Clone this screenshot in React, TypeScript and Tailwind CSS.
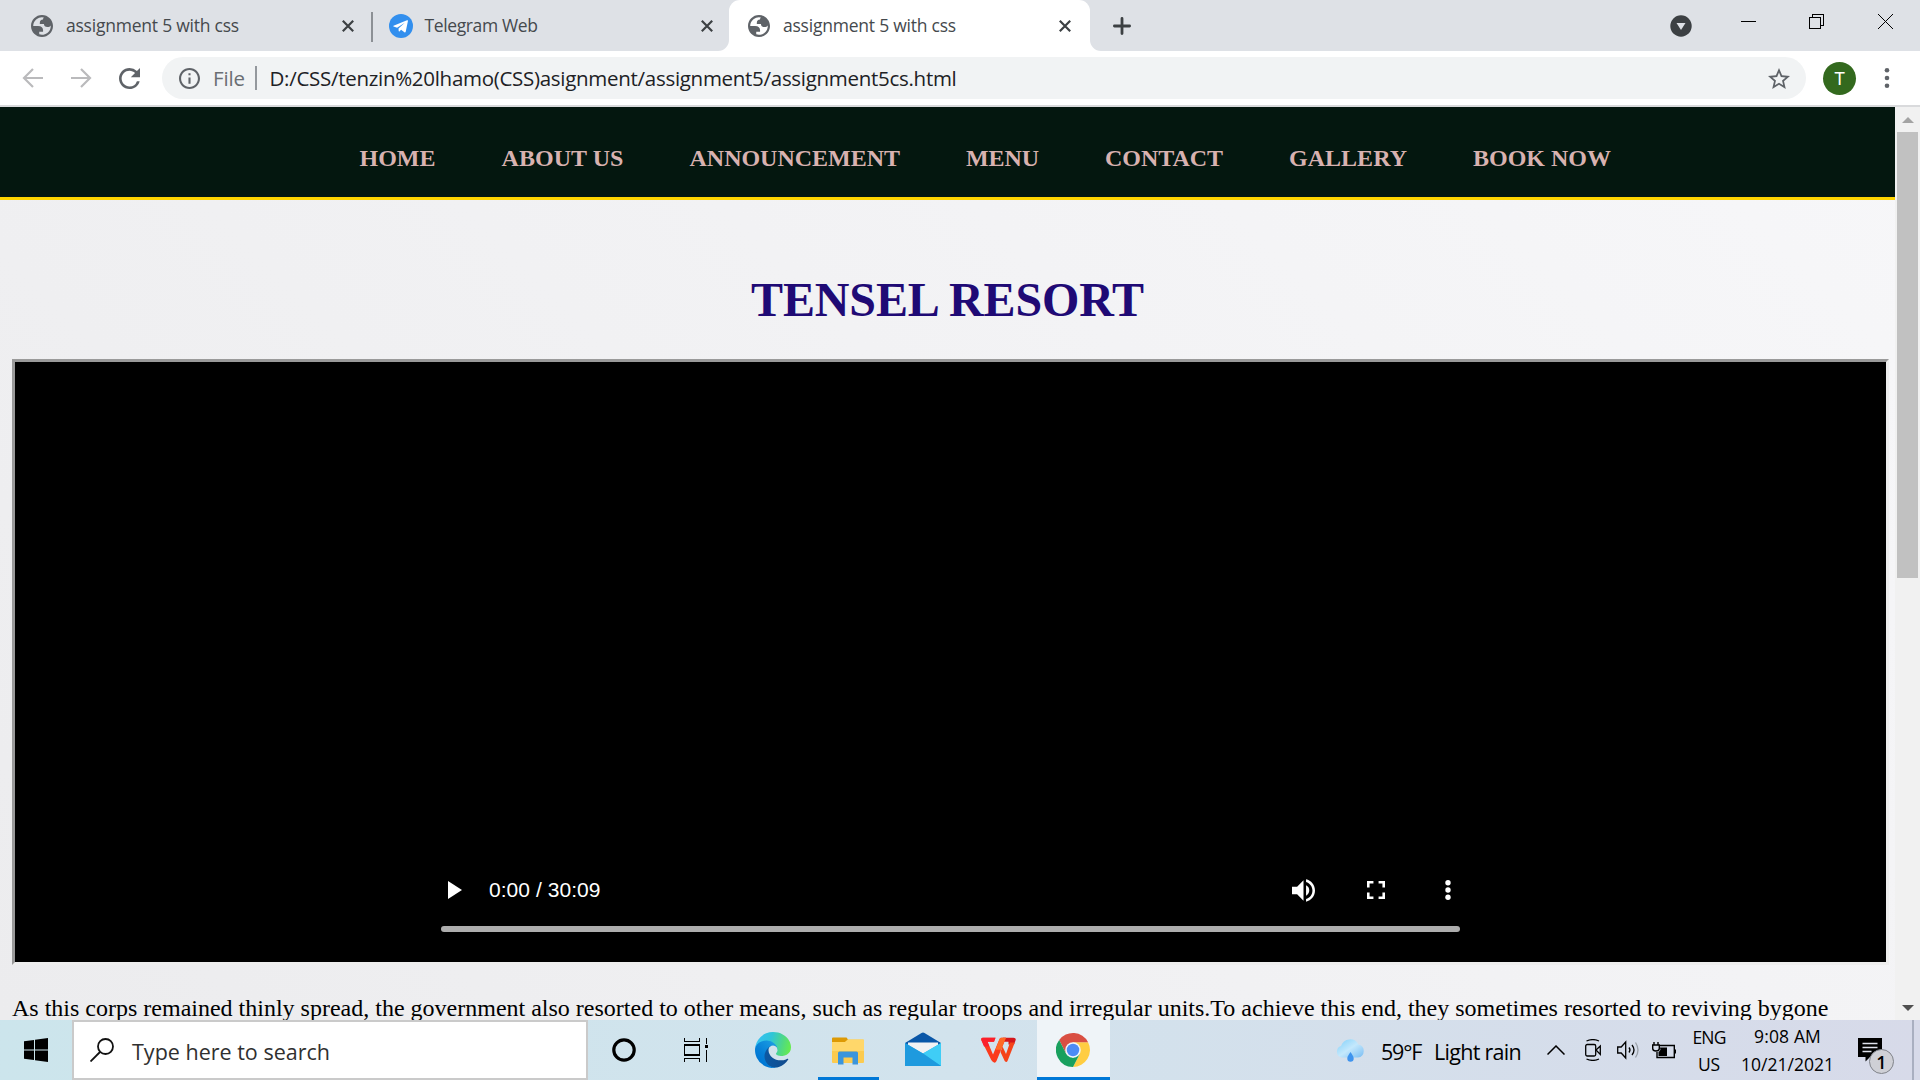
import { useLayoutEffect, useRef, type ReactNode } from "react";

/** Text run that spreads its letters so the run fills exactly `w` pixels. */
function Label({ w, className = "", children }: { w: number; className?: string; children: string }) {
  const ref = useRef<HTMLSpanElement>(null);
  useLayoutEffect(() => {
    const el = ref.current;
    if (!el) return;
    el.style.letterSpacing = "0px";
    const natural = el.getBoundingClientRect().width;
    el.style.letterSpacing = `${(w - natural) / children.length}px`;
  }, [w, children]);
  return (
    <span className={`block shrink-0 ${className}`} style={{ width: w }}>
      <span ref={ref} className="inline-block whitespace-pre">
        {children}
      </span>
    </span>
  );
}

const UI = "font-['Open_Sans','Noto_Sans',sans-serif]";
const SERIF = "font-['Liberation_Serif','Times_New_Roman',serif]";

function Globe() {
  return (
    <svg viewBox="2 2 20 20" className="size-[22px] shrink-0" fill="#5f6368" fillRule="evenodd">
      <path d="M12 2C6.480 2 2 6.480 2 12s4.480 10 10 10 10-4.480 10-10S17.520 2 12 2zM4 12h4.400c3.407.022 4.922 1.730 4.543 5.127H9.488v2.470a8.004 8.004 0 0 0 10.498-8.080C19.327 12.506 18.332 13 17 13c-2.137 0-3.206-.916-3.206-2.750h-3.748c-.274-2.728.683-4.092 2.870-4.092 0-.975.327-1.597.811-1.970A8.004 8.004 0 0 0 4 12z" />
    </svg>
  );
}

function TabClose() {
  return (
    <svg viewBox="0 0 12 12" className="size-3 shrink-0" stroke="#3c4043" strokeWidth="2.2">
      <path d="M.8.8l10.400 10.400M11.200.8L.8 11.200" />
    </svg>
  );
}

function TabStrip() {
  return (
    <div className="flex h-[51px] shrink-0 bg-[#dee1e6] text-[#45494d]">
      <div className="flex w-[371px] items-center pl-[31px]">
        <Globe />
        <Label w={173} className={`ml-[13px] text-[17.500px] ${UI}`}>assignment 5 with css</Label>
        <div className="ml-[103px]"><TabClose /></div>
      </div>
      <div className="mt-3 h-[30px] w-[1.500px] shrink-0 bg-[#8c9095]" />
      <div className="flex w-[356.500px] shrink-0 items-center pl-[16px]">
        <svg viewBox="0 0 24 24" className="size-6 shrink-0">
          <circle cx="12" cy="12" r="12" fill="#328fee" />
          <path d="M4.500 11.800L18 6.300c.7-.2 1.100.2.900.9l-2.200 10.500c-.2.800-.7 1-1.300.6l-3.300-2.500-1.700 1.600c-.4.300-.6.200-.7-.3l-.2-2.600 6.300-5.700-7.700 4.900-3.500-1.100c-.7-.2-.6-.6-.1-.8z" fill="#fff" />
        </svg>
        <Label w={113} className={`ml-[12px] text-[17.500px] ${UI}`}>Telegram Web</Label>
        <div className="ml-[163px]"><TabClose /></div>
      </div>
      <div className="relative flex w-[361px] shrink-0 items-center rounded-t-[11px] bg-white pl-[19px]">
        <svg className="absolute -left-[11px] bottom-0 size-[11px]" viewBox="0 0 11 11">
          <path d="M11 0v11H0A11 11 0 0 0 11 0z" fill="#fff" />
        </svg>
        <svg className="absolute -right-[11px] bottom-0 size-[11px]" viewBox="0 0 11 11">
          <path d="M0 0v11h11A11 11 0 0 1 0 0z" fill="#fff" />
        </svg>
        <Globe />
        <Label w={173} className={`ml-[13px] text-[17.500px] ${UI}`}>assignment 5 with css</Label>
        <div className="ml-[103px]"><TabClose /></div>
      </div>
      <div className="ml-[23px] flex items-center">
        <svg viewBox="0 0 18 18" className="size-[18px]" stroke="#3c4043" strokeWidth="2.800" strokeLinecap="round">
          <path d="M9 1.400v15.200M1.400 9h15.200" />
        </svg>
      </div>
      <div className="ml-auto flex items-start pr-[27px]">
        <svg viewBox="0 0 22 22" className="mt-[14.500px] size-[22px]">
          <circle cx="11" cy="11" r="10.700" fill="#3c4043" />
          <path d="M6.500 8h9L11 15z" fill="#dee1e6" />
        </svg>
        <div className="mt-[21px] ml-[49px] h-px w-[15px] bg-black" />
        <svg viewBox="0 0 15 15" className="mt-[14px] ml-[53px] size-[15px]" fill="none" stroke="#000" shapeRendering="crispEdges">
          <path d="M.5 3.500h11v11H.5zM3.500 3.500v-3h11v11h-3" />
        </svg>
        <svg viewBox="0 0 15 15" className="mt-[14px] ml-[54px] size-[15px]" stroke="#000">
          <path d="M0 0l15 15M15 0L0 15" />
        </svg>
      </div>
    </div>
  );
}

function Toolbar() {
  return (
    <div className="flex h-[56px] shrink-0 items-center border-b-2 border-[#d9dadc] bg-white pl-[22px]">
      <svg viewBox="0 0 22 20" className="h-5 w-[22px] shrink-0" fill="none" stroke="#bababc" strokeWidth="2.200">
        <path d="M21 10H2.500M11 1L2 10l9 9" />
      </svg>
      <svg viewBox="0 0 22 20" className="ml-[26px] h-5 w-[22px] shrink-0" fill="none" stroke="#bababc" strokeWidth="2.200">
        <path d="M1 10h18.500M11 1l9 9-9 9" />
      </svg>
      <svg viewBox="4 4 16 16" className="ml-[27px] size-[21px] shrink-0" fill="#5f6368">
        <path d="M17.650 6.350A7.958 7.958 0 0 0 12 4c-4.420 0-7.990 3.580-7.990 8s3.570 8 7.990 8c3.730 0 6.840-2.550 7.730-6h-2.080A5.990 5.990 0 0 1 12 18c-3.310 0-6-2.690-6-6s2.690-6 6-6c1.660 0 3.140.690 4.220 1.780L13 11h7V4l-2.350 2.350z" />
      </svg>
      <div className="ml-[22px] flex h-[42px] w-[1644px] shrink-0 items-center rounded-full bg-[#f1f3f4] pl-[17px]">
        <svg viewBox="2 2 20 20" className="size-[21px] shrink-0" fill="#5f6368">
          <path d="M11 7h2v2h-2zm0 4h2v6h-2zm1-9C6.480 2 2 6.480 2 12s4.480 10 10 10 10-4.480 10-10S17.520 2 12 2zm0 18c-4.410 0-8-3.590-8-8s3.590-8 8-8 8 3.590 8 8-3.590 8-8 8z" />
        </svg>
        <Label w={32} className={`mt-px ml-[13px] text-[20.500px] text-[#6a6e73] ${UI}`}>File</Label>
        <div className="ml-[10px] h-6 w-[1.500px] shrink-0 bg-[#94989d]" />
        <Label w={687} className={`mt-px ml-[13px] text-[20.500px] text-[#202124] ${UI}`}>
          D:/CSS/tenzin%20lhamo(CSS)asignment/assignment5/assignment5cs.html
        </Label>
        <svg viewBox="2 2 20 19" className="mr-4 ml-auto h-[21px] w-[22px] shrink-0" fill="#5f6368">
          <path d="M22 9.240l-7.190-.620L12 2 9.190 8.630 2 9.240l5.460 4.730L5.820 21 12 17.270 18.180 21l-1.630-7.030L22 9.240zM12 15.400l-3.760 2.270 1-4.280-3.320-2.880 4.380-.380L12 6.100l1.710 4.040 4.380.380-3.320 2.880 1 4.280L12 15.400z" />
        </svg>
      </div>
      <div className="ml-[17px] flex size-[33px] shrink-0 items-center justify-center rounded-full bg-[#33691e] pt-px font-['Roboto',sans-serif] text-[18px] text-white">
        T
      </div>
      <svg viewBox="0 0 6 22" className="ml-[28px] h-[22px] w-1.5 shrink-0" fill="#5f6368">
        <circle cx="3" cy="3.200" r="2.300" />
        <circle cx="3" cy="11" r="2.300" />
        <circle cx="3" cy="18.800" r="2.300" />
      </svg>
    </div>
  );
}

const NAV: [string, number][] = [
  ["HOME", 76],
  ["ABOUT US", 122],
  ["ANNOUNCEMENT", 210.5],
  ["MENU", 73],
  ["CONTACT", 118],
  ["GALLERY", 118],
  ["BOOK NOW", 138],
];

function Video() {
  return (
    <div className="mx-3 flex h-[606px] w-[1877px] shrink-0 flex-col border-[3px] border-t-[#9a9a9a] border-r-[#eeeeee] border-b-[#eeeeee] border-l-[#9a9a9a] bg-black">
      <div className="mt-auto mr-[426px] mb-[30px] ml-[426px]">
        <div className="flex h-6 items-center pl-[7px]">
          <svg viewBox="0 0 14 18" className="h-[18px] w-[14px]" fill="#fff"><path d="M0 0l14 9-14 9z" /></svg>
          <Label w={111.5} className="ml-[27px] font-['Liberation_Sans',Arial,sans-serif] text-[21px] leading-6 text-white">0:00 / 30:09</Label>
          <svg viewBox="3 3.200 18 17.600" className="ml-auto size-[23px]" fill="#fff">
            <path d="M3 9v6h4l5 5V4L7 9H3zm13.500 3A4.500 4.500 0 0 0 14 7.970v8.050c1.480-.730 2.500-2.250 2.500-4.020zM14 3.230v2.060c2.890.860 5 3.540 5 6.710s-2.110 5.850-5 6.710v2.060c4.010-.910 7-4.490 7-8.770s-2.990-7.860-7-8.770z" />
          </svg>
          <svg viewBox="5 5 14 14" className="ml-[52px] size-[18px]" fill="#fff">
            <path d="M7 14H5v5h5v-2H7v-3zm-2-4h2V7h3V5H5v5zm12 7h-3v2h5v-5h-2v3zM14 5v2h3v3h2V5h-5z" />
          </svg>
          <svg viewBox="0 0 6 20" className="mr-[9px] ml-[60px] h-5 w-1.5" fill="#fff">
            <circle cx="3" cy="2.700" r="2.700" />
            <circle cx="3" cy="10" r="2.700" />
            <circle cx="3" cy="17.300" r="2.700" />
          </svg>
        </div>
        <div className="mt-6 h-1.5 rounded-full bg-[#adadad]" />
      </div>
    </div>
  );
}

function Page() {
  return (
    <div className={`flex w-[1895px] shrink-0 flex-col overflow-hidden bg-linear-45 from-[#ececee] to-[#f7f7f9] ${SERIF}`}>
      <nav className="flex h-[93px] shrink-0 items-center gap-[66px] border-b-[3px] border-[#ffd500] bg-[#04170f] pt-[12px] pl-[359.500px] text-[24px] leading-7 font-bold text-[#d8b2b0]">
        {NAV.map(([t, w]) => (
          <Label key={t} w={w}>{t}</Label>
        ))}
      </nav>
      <h1 className="mt-[72px] flex h-[56px] shrink-0 justify-center text-[48px] leading-[56px] font-bold text-[#1f0a75]">
        <Label w={393}>TENSEL RESORT</Label>
      </h1>
      <div className="h-[31px] shrink-0" />
      <Video />
      <p className="mt-[29px] ml-3 flex shrink-0 text-[24px] leading-7 text-black">
        <Label w={1816.5}>
          As this corps remained thinly spread, the government also resorted to other means, such as regular troops and irregular units.To achieve this end, they sometimes resorted to reviving bygone
        </Label>
      </p>
    </div>
  );
}

function Scrollbar() {
  return (
    <div className="flex grow flex-col items-center bg-[#f1f1f1]">
      <svg viewBox="0 0 12 6" className="mt-[10px] h-1.5 w-3" fill="#a3a3a3"><path d="M6 0l6 6H0z" /></svg>
      <div className="mt-[9px] h-[446px] w-[21px] bg-[#c1c1c1]" />
      <svg viewBox="0 0 12 6" className="mt-auto mb-[9px] h-1.5 w-3" fill="#505050"><path d="M0 0h12L6 6z" /></svg>
    </div>
  );
}

function EdgeIcon() {
  return (
    <svg viewBox="0 0 256 256" className="size-9">
      <defs>
        <linearGradient id="e1" x1="63" y1="177" x2="241" y2="177" gradientUnits="userSpaceOnUse">
          <stop offset="0" stopColor="#0c59a4" />
          <stop offset="1" stopColor="#114a8b" />
        </linearGradient>
        <linearGradient id="e2" x1="157" y1="92" x2="46" y2="213" gradientUnits="userSpaceOnUse">
          <stop offset="0" stopColor="#1b9de2" />
          <stop offset=".16" stopColor="#1595df" />
          <stop offset=".67" stopColor="#0680d7" />
          <stop offset="1" stopColor="#0078d4" />
        </linearGradient>
        <linearGradient id="e3" x1="10" y1="60" x2="250" y2="120" gradientUnits="userSpaceOnUse">
          <stop offset="0" stopColor="#35c1f1" />
          <stop offset=".4" stopColor="#2fc5d8" />
          <stop offset=".75" stopColor="#4fd983" />
          <stop offset="1" stopColor="#66eb4f" />
        </linearGradient>
      </defs>
      <path fill="url(#e1)" d="M231 190.500c-3.400 1.800-6.900 3.400-10.500 4.700a101.700 101.700 0 0 1-35.900 6.500c-47.300 0-88.500-32.500-88.500-74.300.1-11.400 6.400-21.900 16.400-27.300-42.800 1.800-53.800 46.400-53.800 72.500 0 73.900 68.100 81.400 82.800 81.400 7.900 0 19.800-2.300 27-4.600l1.300-.4a128.300 128.300 0 0 0 66.600-52.800 4 4 0 0 0-5.400-5.700z" />
      <path fill="url(#e2)" d="M105.700 241.400a79.200 79.200 0 0 1-22.700-21.300 80.700 80.700 0 0 1 29.500-120c3.200-1.500 8.500-4.100 15.600-4a32.400 32.400 0 0 1 25.700 13 31.900 31.900 0 0 1 6.300 18.700c0-.2 24.500-79.600-80-79.600C36.200 48.200.1 89.900.1 126.400c-.2 19.300 4 38.500 12.100 56a128 128 0 0 0 156.400 67 75.500 75.500 0 0 1-62.800-8z" />
      <path fill="url(#e3)" d="M152.300 148.900c-.9 1-3.400 2.500-3.400 5.600 0 2.600 1.700 5.200 4.800 7.300 14.300 10 41.400 8.600 41.500 8.600 10.700 0 21.100-2.900 30.300-8.300A61.400 61.400 0 0 0 256 109.100c.3-22.400-8-37.300-11.300-43.900C223.500 23.900 177.700 0 128 0A128 128 0 0 0 0 126.200C.5 89.700 36.800 60.200 80 60.200c3.500 0 23.500.3 42 10.100 16.300 8.600 24.900 18.900 30.800 29.200 6.200 10.700 7.300 24.100 7.300 29.500 0 5.300-2.700 13.300-7.800 19.900z" />
    </svg>
  );
}

function ExplorerIcon() {
  return (
    <svg viewBox="0 0 34 28" className="h-7 w-[34px]">
      <path d="M1 1.500Q1 .5 2 .5h13.500L17 2.500 15 5H1z" fill="#dd9a05" />
      <path d="M1 5h13l3-2.500h15q1 0 1 1V25q0 1-1 1H2q-1 0-1-1z" fill="#fccb4f" />
      <path d="M1 5h13l3-2.500h15q1 0 1 1V14H1z" fill="#ffd76a" />
      <path d="M7 27.500V16q0-1.500 1.500-1.500h17q1.500 0 1.500 1.500v11.500h-5.500v-7h-9v7z" fill="#3b95dc" />
    </svg>
  );
}

function MailIcon() {
  return (
    <svg viewBox="0 0 36 34" className="h-[34px] w-9">
      <path d="M0 11L16.500 1q1.500-.9 3 0L36 11V20H0z" fill="#0a57a8" />
      <path d="M3 10.500h30v12H3z" fill="#f2f2f4" />
      <path d="M0 11l18 10.500L36 11V34H0z" fill="#2bb4ea" />
      <path d="M36 11V34L18 21.500z" fill="#3fcdf6" />
      <path d="M0 11l18 10.500L36 34H0z" fill="#1e9ade" />
    </svg>
  );
}

function WpsIcon() {
  return (
    <svg viewBox="0 0 35 26" className="h-[26px] w-[35px]">
      <path d="M22 .8h10.500Q35.500.8 34.500 3.500L33 7.500h-5.500V4.800H21z" fill="#d4161b" />
      <path d="M29 5.500h4.800L26.500 24q-1 2-2.800 0L19.500 15l2-5.500 3.500 7.500z" fill="#f5431a" />
      <path d="M.5 3.500Q-.5.8 2 .8h12.500L13 4.800H6.500L12 17.500 18.500 2Q19 .8 20.500.8H25L15.500 24q-1.500 3-4 .5Q10 23 9.500 21.500z" fill="#fb3a1c" />
      <path d="M.5 3.500Q-.5.8 2 .8h12.500L13 4.800H6.500l2 4.700H3z" fill="#fb1f2b" />
      <path d="M18.500 2Q19 .8 20.500.8H25l-5 12h-5.500z" fill="#ff6a26" />
    </svg>
  );
}

function ChromeIcon() {
  return (
    <svg viewBox="0 0 48 48" className="size-[34px]">
      <path d="M24 13h21.300A24 24 0 0 1 24 48l9.500-18.500z" fill="#ffcd42" />
      <path d="M4.500 10A24 24 0 0 1 45.300 13H24l-9.500 16.500z" fill="#d94f43" />
      <path d="M4.500 10l10 19.500L24 35l9.500-5.500L24 48A24 24 0 0 1 4.500 10z" fill="#19a05e" />
      <circle cx="24" cy="24" r="11" fill="#f1f5f9" />
      <circle cx="24" cy="24" r="8.800" fill="#4c8bf5" />
    </svg>
  );
}

function Cell({ w, active = false, line = 0, children }: { w: number; active?: boolean; line?: number; children: ReactNode }) {
  return (
    <div className={`flex h-full shrink-0 flex-col items-center ${active ? "bg-[#eff4f8]" : ""}`} style={{ width: w }}>
      <div className="flex h-[57px] items-center pt-[3px]">{children}</div>
      {line > 0 && <div className="h-[3px] bg-[#0078d7]" style={{ width: line }} />}
    </div>
  );
}

function Taskbar() {
  return (
    <div className={`flex h-[60px] shrink-0 items-stretch bg-linear-to-r from-[#cce5ec] via-[#d2e3ed] via-50% to-[#d7dae9] text-black ${UI}`}>
      <div className="flex w-[72px] items-center justify-center">
        <svg viewBox="0 0 24 24" className="size-6" fill="#000">
          <path d="M0 3.300L10 2v9.500H0zM11 1.800L24 0v11.500H11zM0 12.500h10V22L0 20.700zM11 12.500h13V24l-13-1.800z" />
        </svg>
      </div>
      <div className="flex w-[516px] shrink-0 items-center border-2 border-[#cacaca] bg-white pl-4">
        <svg viewBox="0 0 24 24" className="size-6 shrink-0" fill="none" stroke="#111" strokeWidth="1.800">
          <circle cx="15.500" cy="8.500" r="7.500" />
          <path d="M10 14L.5 23.500" />
        </svg>
        <Label w={198} className="mt-[4px] ml-[18px] text-[21.500px] text-[#303030]">Type here to search</Label>
      </div>
      <Cell w={72}>
        <svg viewBox="0 0 24 24" className="size-6" fill="none" stroke="#000" strokeWidth="3.200"><circle cx="12" cy="12" r="10.200" /></svg>
      </Cell>
      <Cell w={72}>
        <svg viewBox="0 0 24 24" className="size-6" fill="none" stroke="#000" strokeWidth="1.500" shapeRendering="crispEdges">
          <path d="M.5 7h15v10H.5zM.5 0v3.500h15V0M.5 24v-3.500h15V24M22.500 0v6M22.500 11.500V24" />
          <path d="M21 7h3v3h-3z" fill="#000" stroke="none" />
        </svg>
      </Cell>
      <Cell w={82}><div className="-mt-px"><EdgeIcon /></div></Cell>
      <Cell w={68} line={61}><div className="mt-px mr-px"><ExplorerIcon /></div></Cell>
      <Cell w={81}><div className="-mt-[3px]"><MailIcon /></div></Cell>
      <Cell w={70}><WpsIcon /></Cell>
      <div className="w-1" />
      <Cell w={73} active line={73}><div className="mr-0.5"><ChromeIcon /></div></Cell>
      <div className="ml-[225px] flex shrink-0 items-center">
        <svg viewBox="0 0 30 24" className="mt-px h-6 w-[30px]">
          <defs>
            <linearGradient id="cloud" x1="0" y1="0" x2="1" y2="1">
              <stop offset="0" stopColor="#7fd0fa" />
              <stop offset=".5" stopColor="#c4e8fc" />
              <stop offset="1" stopColor="#79bdf3" />
            </linearGradient>
          </defs>
          <path d="M6.500 18.500A6 6 0 0 1 6 7 9.500 9.500 0 0 1 23.500 5.500 6.600 6.600 0 0 1 23 18.500z" fill="url(#cloud)" />
          <path d="M15.500 13c2 3 3.200 4.500 3.200 6.500a3.200 3.200 0 0 1-6.400 0c0-2 1.200-3.500 3.200-6.500z" fill="#3f94ee" />
        </svg>
        <Label w={40} className="mt-[5px] ml-4 text-[21.500px]">59°F</Label>
        <Label w={87} className="mt-[5px] ml-[13px] text-[21.500px]">Light rain</Label>
        <svg viewBox="0 0 18 10" className="ml-[26px] h-[10px] w-[18px]" fill="none" stroke="#000" strokeWidth="1.500"><path d="M.5 9.500L9 1l8.500 8.500" /></svg>
        <svg viewBox="0 0 16 22" className="ml-5 h-[22px] w-4" fill="none" stroke="#000" strokeWidth="1.300">
          <rect x=".7" y="5.500" width="10" height="11.500" rx="1.500" />
          <path d="M11 11l4.300-4v8.500zM1.500 2Q8-.8 14 2M1.500 20Q8 22.800 14 20" />
        </svg>
        <svg viewBox="0 0 22 20" className="ml-4 h-5 w-[22px]" fill="none" stroke="#000" strokeWidth="1.300">
          <path d="M.7 7v6h3.500l4.500 5V2L4.200 7zM12 7.500q2 2.500 0 5M15 5q4 5 0 10" />
          <path d="M18.500 2.500q5 7.500 0 15" stroke="#9aa0a8" />
        </svg>
        <svg viewBox="0 0 24 17" className="ml-[13px] h-[17px] w-6" fill="none" stroke="#000" strokeWidth="1.400">
          <path d="M7.500 3.500h14.800v12H5V10M23.500 7.500v4M2 0v3M6 0v3M.7 3h6.600v3.500q0 2.500-3.300 2.500T.7 6.500z" />
          <path d="M7.500 5.500h7.500v8.500H6.500V10q2-1 2-3z" fill="#000" stroke="none" />
        </svg>
      </div>
      <div className="ml-[17px] flex w-[32px] shrink-0 flex-col items-center pt-[4px] text-[17.500px] leading-[27px]">
        <Label w={33}>ENG</Label>
        <Label w={22}>US</Label>
      </div>
      <div className="ml-[16px] flex w-[93px] shrink-0 flex-col items-center pt-[4px] text-[17.500px] leading-[27px]">
        <Label w={67} className="-mt-px mb-px">9:08 AM</Label>
        <Label w={93}>10/21/2021</Label>
      </div>
      <div className="relative ml-[24px] w-[54px] shrink-0">
        <svg viewBox="0 0 24 24" className="mt-[18px] size-6">
          <path d="M0 0h24v19H12l-4.500 4.500V19H0z" fill="#000" />
          <path d="M4.500 5.500h15M4.500 9.500h15M4.500 13.500h9" stroke="#dfe2ec" strokeWidth="1.400" />
        </svg>
        <div className="absolute top-[29px] left-[11px] flex size-[25px] items-center justify-center rounded-full border border-[#80838a] bg-[#cfd0d6] text-[18px] leading-none font-semibold">
          1
        </div>
      </div>
      <div className="w-0.5 shrink-0 bg-[#a9afc0]" />
    </div>
  );
}

export default function App() {
  return (
    <div className="flex h-[1080px] w-[1920px] flex-col overflow-hidden">
      <TabStrip />
      <Toolbar />
      <div className="flex h-[913px] shrink-0 overflow-hidden">
        <Page />
        <Scrollbar />
      </div>
      <Taskbar />
    </div>
  );
}
